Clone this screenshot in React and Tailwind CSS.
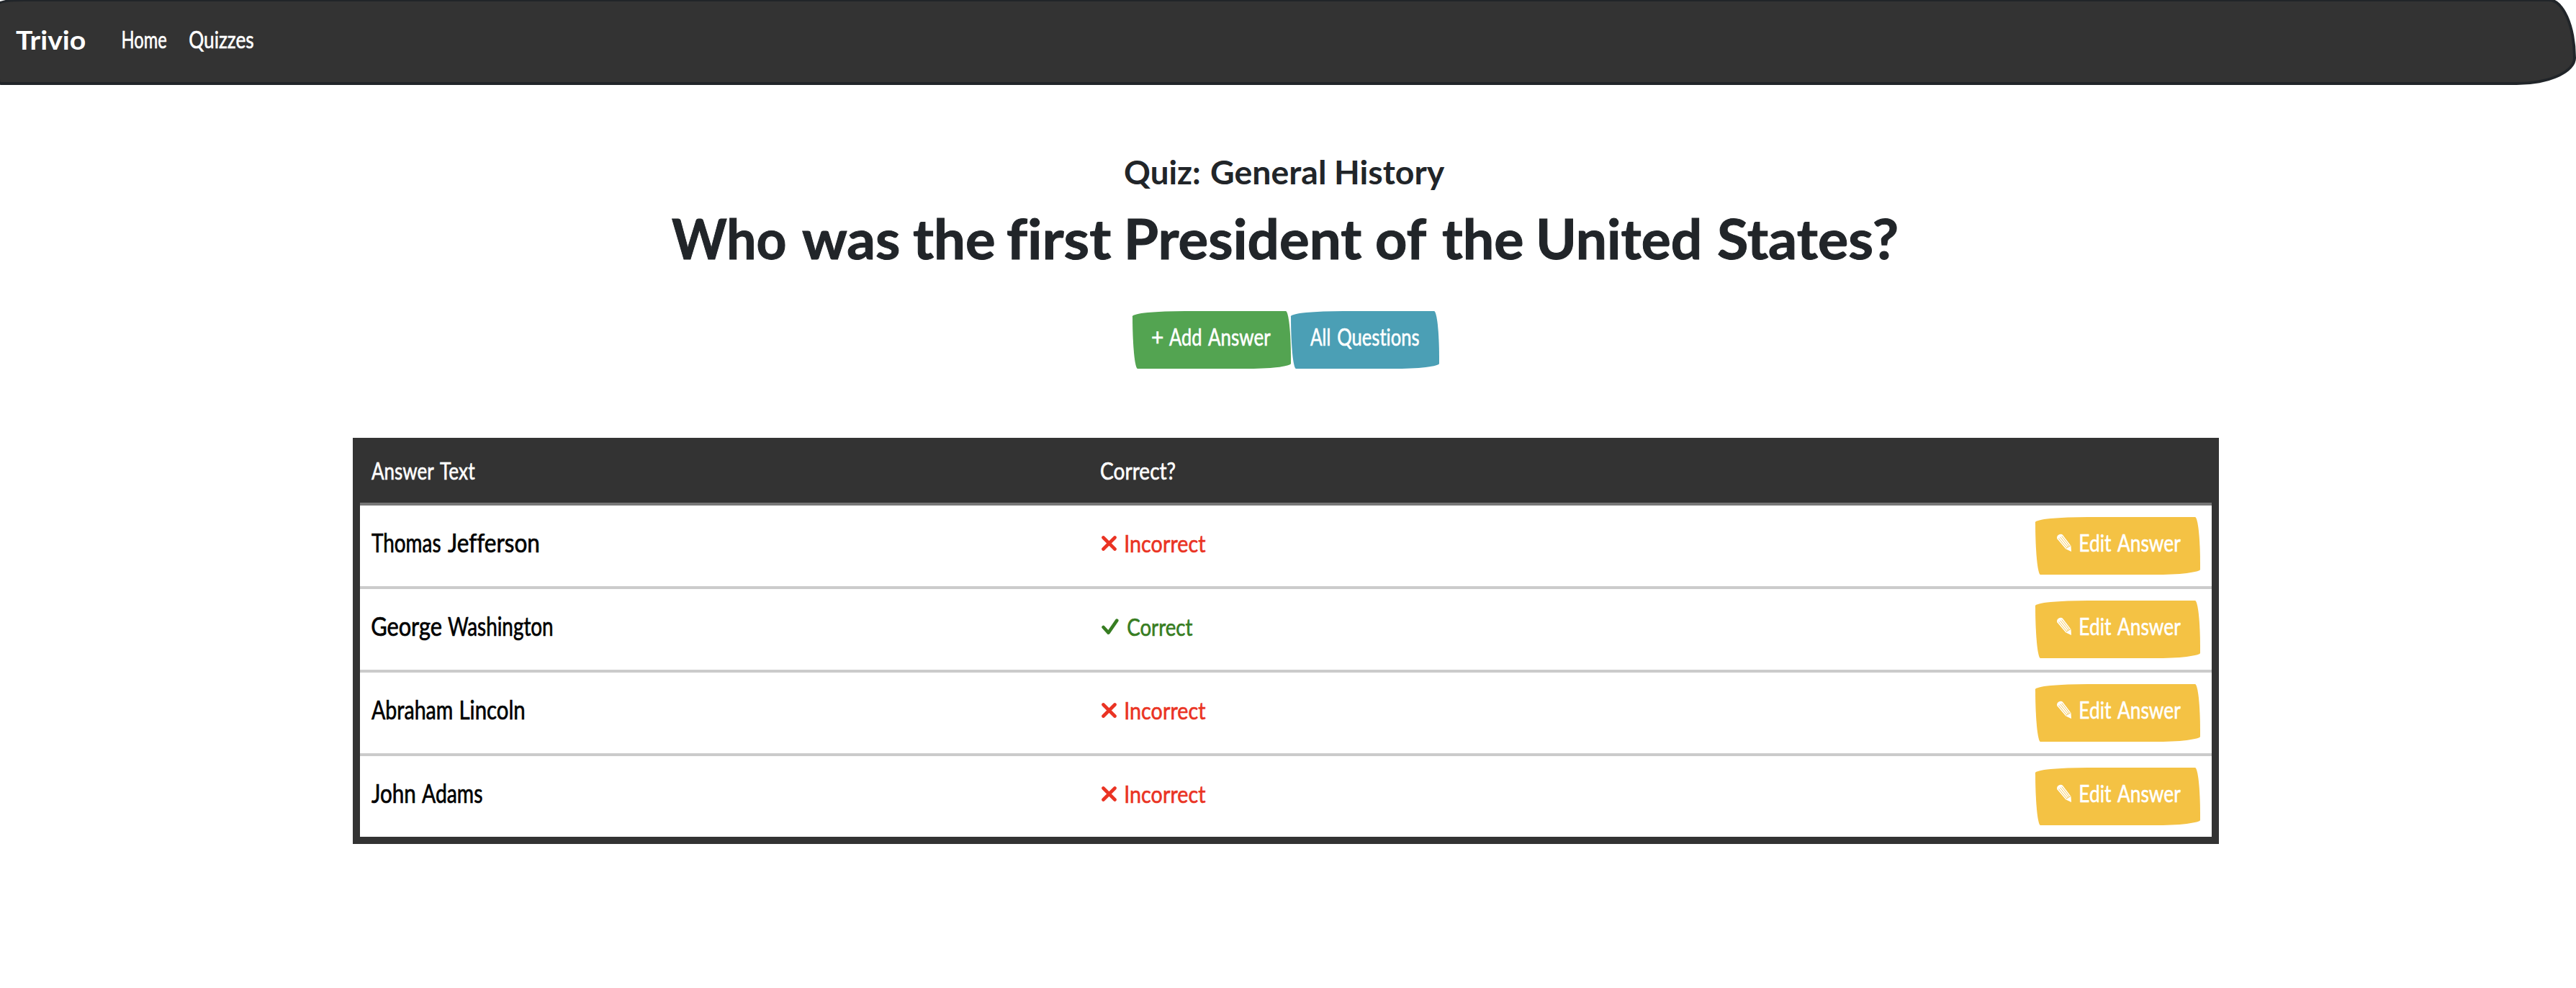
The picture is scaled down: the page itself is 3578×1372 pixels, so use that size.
import { useLayoutEffect, useRef } from "react";

// One word squeezed horizontally so that its ink fills the given width.
function Word({ text, width, gap }) {
  const ref = useRef(null);
  useLayoutEffect(() => {
    const el = ref.current;
    const cs = getComputedStyle(el);
    const ctx = document.createElement("canvas").getContext("2d");
    ctx.font = `${cs.fontWeight} ${cs.fontSize} ${cs.fontFamily}`;
    // A tiny letter spacing switches ligatures off, as the page's text does.
    ctx.letterSpacing = "0.01px";
    const m = ctx.measureText(text);
    const k = width / (m.actualBoundingBoxLeft + m.actualBoundingBoxRight);
    el.style.transform = `translateX(${m.actualBoundingBoxLeft * k}px) scaleX(${k})`;
  }, [text, width]);
  return (
    <span className="block shrink-0" style={{ width, marginRight: gap }}>
      <span ref={ref} className="block w-max origin-left whitespace-pre tracking-[0.01px]">{text + " "}</span>
    </span>
  );
}

// words: [text, width, gap to the next word]
function Words({ words, className = "" }) {
  return (
    <span className={"flex " + className}>
      {words.map(([text, width, gap = 0], i) => (
        <Word key={i} text={text} width={width} gap={gap} />
      ))}
    </span>
  );
}

const SKETCHY = "rounded-[510px_50px_450px_50px/50px_450px_50px_510px]";
const BODY = "text-[32px] leading-[40px] [-webkit-text-stroke:0.6px_currentColor]";

function Button({ className, children }) {
  return (
    <a className={`flex h-[80px] items-center pb-2 text-white ${SKETCHY} ${BODY} ${className}`}>
      {children}
    </a>
  );
}

function Pencil() {
  return (
    <svg width="22" height="26" viewBox="0 0 22 26" className="mr-[11px] shrink-0" fill="none">
      <path d="M1 5.5 Q1.6 1.4 6 .8 Q8 .6 9.2 2 L20.5 17 L21 25 L13.2 21.3 L1.4 7.2 Z" fill="#fff" />
      <path d="M3.4 6.5 L14.2 19.6 M5.5 4.8 L16.2 18.2 M7.8 3.5 L18.2 17" stroke="#f4c244" strokeWidth="0.9" />
      <path d="M13.8 20.2 Q15.2 20.4 15.5 18.9 Q17.6 19.2 17.6 17.4 Q19 17.8 19.8 16.9" stroke="#f4c244" strokeWidth="0.9" />
    </svg>
  );
}

function Cross() {
  return (
    <svg width="21" height="21" viewBox="0 0 21 21" className="mr-3 shrink-0" fill="none" stroke="currentColor" strokeWidth="4.6" strokeLinecap="round">
      <path d="M2.5 2.5 L18.5 18.5 M18.5 2.5 L2.5 18.5" />
    </svg>
  );
}

function Check() {
  return (
    <svg width="24" height="23" viewBox="0 0 24 23" className="mr-3 shrink-0" fill="none" stroke="currentColor" strokeWidth="4.6" strokeLinecap="round" strokeLinejoin="round">
      <path d="M2.6 12 L9.6 19.6 L21.3 2.6" />
    </svg>
  );
}

const answers = [
  { name: [["Thomas", 96, 10], ["Jefferson", 126]], correct: false },
  { name: [["George", 97, 9], ["Washington", 145]], correct: true },
  { name: [["Abraham", 112, 12], ["Lincoln", 88]], correct: false },
  { name: [["John", 60, 10], ["Adams", 84]], correct: false },
];

export default function App() {
  return (
    <div className="min-h-[1372px] w-[3578px] overflow-hidden bg-white font-['Lato',sans-serif] text-[#212529]">
      <nav className="-mt-[2px] -ml-[4px] flex h-[120px] w-[3582px] items-center rounded-[37px_37.5px_82.5px_5px/7.5px_82.5px_37.5px_8px] border-4 border-[#212529] bg-[#333] pb-[7px] pl-[22px] text-white">
        <Words words={[["Trivio", 97]]} className="mr-[51px] text-[37px] leading-[44px] font-bold" />
        <Words words={[["Home", 61]]} className={`mr-8 ${BODY}`} />
        <Words words={[["Quizzes", 89]]} className={BODY} />
      </nav>

      <main className="ml-[490px] w-[2592px]">
        <h4 className="mt-[91px] pl-[1072px] text-[46px] leading-[60px] font-bold">
          <Words words={[["Quiz:", 104, 16], ["General", 158, 16], ["History", 151]]} />
        </h4>
        <h1 className="mt-[16px] pl-[443px] text-[76px] leading-[92px] font-bold [-webkit-text-stroke:1px_currentColor]">
          <Words
            words={[
              ["Who", 158, 23],
              ["was", 134, 21],
              ["the", 112, 18],
              ["first", 144, 24],
              ["President", 324, 21],
              ["of", 69, 23],
              ["the", 111, 23],
              ["United", 222, 26],
              ["States?", 248],
            ]}
          />
        </h1>

        <div className="mt-[55px] flex justify-center">
          <Button className="w-[220px] bg-[#53a451] pl-[27px]">
            <Words words={[["+", 15, 9], ["Add", 44, 10], ["Answer", 87]]} />
          </Button>
          <Button className="w-[206px] bg-[#4b9fb5] pl-[27px]">
            <Words words={[["All", 27, 11], ["Questions", 113]]} />
          </Button>
        </div>

        <div className="mt-[96px] border-10 border-[#333]">
          <div className={`flex h-[84px] items-center border-b-4 border-[#777] bg-[#333] px-4 pb-2 text-white ${BODY}`}>
            <Words words={[["Answer", 87, 8], ["Text", 49]]} className="w-[1013px]" />
            <Words words={[["Correct?", 103]]} />
          </div>
          <div className="divide-y-4 divide-[#cbcbcb]">
            {answers.map((a, i) => (
              <div key={i} className="box-content flex h-[112px] items-center">
                <div className="w-[1030px] pb-[10px] pl-4 text-[36px] leading-[44px] text-black [-webkit-text-stroke:0.7px_currentColor]">
                  <Words words={a.name} />
                </div>
                <div className={`flex flex-1 items-center pb-[7px] ${BODY} ${a.correct ? "text-[#377d22]" : "text-[#ea3323]"}`}>
                  {a.correct ? <Check /> : <Cross />}
                  <Words words={a.correct ? [["Correct", 91]] : [["Incorrect", 112]]} />
                </div>
                <Button className="mr-4 w-[229px] bg-[#f4c244] pl-[29px]">
                  <Pencil />
                  <Words words={[["Edit", 44, 8], ["Answer", 88]]} />
                </Button>
              </div>
            ))}
          </div>
        </div>
      </main>
    </div>
  );
}
